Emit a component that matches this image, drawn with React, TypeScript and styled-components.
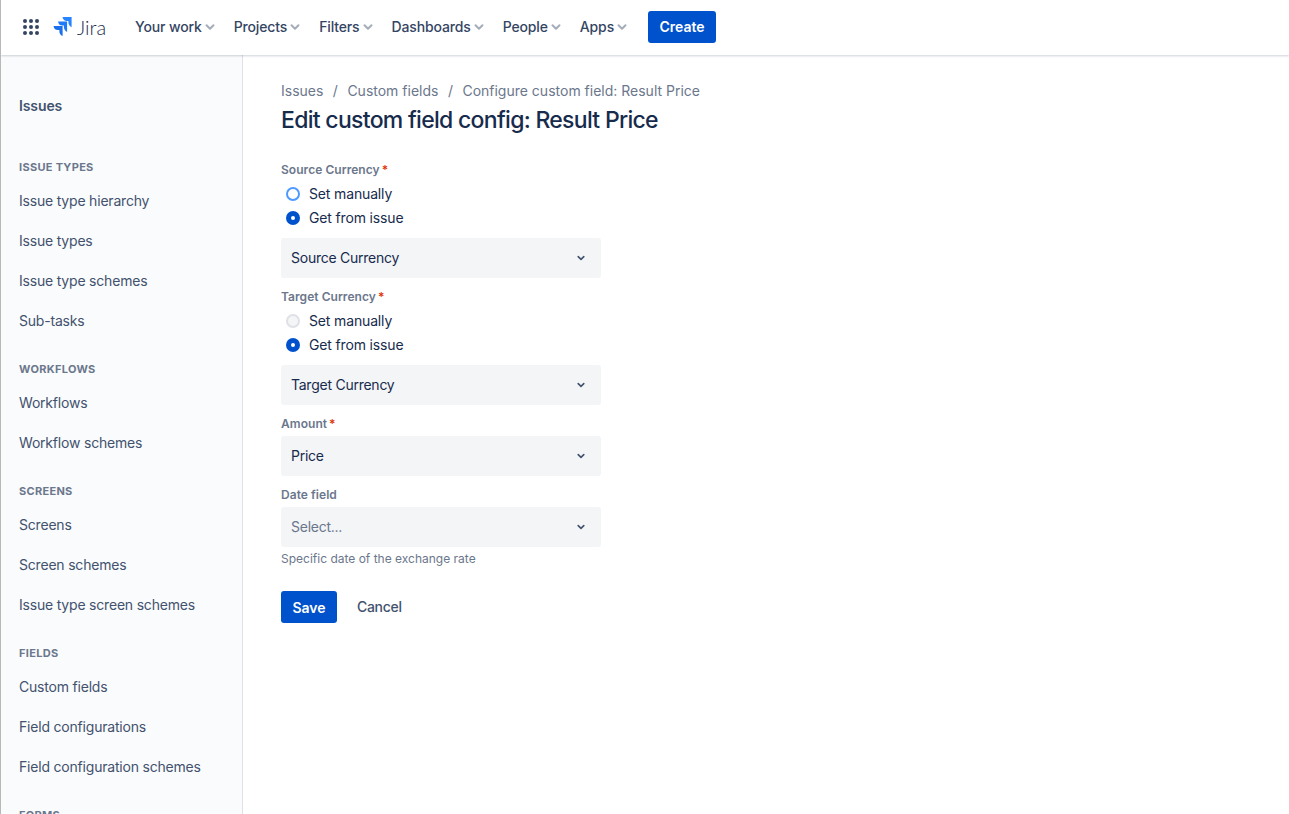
import styled, { createGlobalStyle } from "styled-components";

const GlobalStyle = createGlobalStyle`
  html, body {
    margin: 0;
    height: 100%;
    overflow: hidden;
    background: #fff;
  }
  body {
    font-family: Inter, "Noto Sans", sans-serif;
    font-size: 14px;
    color: #172b4d;
  }
`

const Page = styled.div`
  display: flex;
  flex-direction: column;
  height: 814px;
  border-left: 1px solid #b8b8b8;
  overflow: hidden;
`
const Header = styled.header`
  display: flex;
  align-items: center;
  flex: none;
  box-sizing: border-box;
  height: 55px;
  padding: 0 0 2px 22px;
  background: #fff;
  box-shadow: 0 1px 2px rgba(9, 30, 66, 0.2);
  position: relative;
  z-index: 1;
`
const AppSwitcher = styled.svg`
  width: 16px;
  height: 16px;
  flex: none;
  color: #344563;
`
const Logo = styled.div`
  display: flex;
  align-items: center;
  gap: 5px;
  margin-left: 14px;
  margin-right: 29px;
`
const LogoText = styled.span`
  font-family: Lato, Inter, sans-serif;
  font-weight: 300;
  font-size: 20px;
  color: #172b4d;
  line-height: 24px;
`
const Nav = styled.nav`
  display: flex;
  align-items: center;
  margin-right: 2px;
`
const NavItem = styled.div`
  display: flex;
  align-items: center;
  gap: 3px;
  margin-right: 19px;
  font-weight: 500;
  letter-spacing: -0.14px;
  color: #344563;
  line-height: 20px;
`
const NavChevron = styled.svg`
  width: 10px;
  height: 10px;
  color: #a5adba;
`
const PrimaryButton = styled.button<{ $width: number }>`
  width: ${({ $width }) => $width}px;
  height: 32px;
  padding: 0;
  border: 0;
  border-radius: 3px;
  background: #0052cc;
  color: #fff;
  font-family: inherit;
  font-size: 14px;
  font-weight: 600;
`
const Body = styled.div`
  display: flex;
  flex: 1;
  min-height: 0;
`
const Sidebar = styled.aside`
  flex: none;
  box-sizing: border-box;
  width: 242px;
  padding: 41px 0 0 18px;
  background: #fafbfc;
  border-right: 1px solid #dfe1e6;
  overflow: hidden;
`
const SidebarTitle = styled.div`
  height: 20px;
  line-height: 20px;
  font-weight: 600;
  letter-spacing: -0.1px;
  color: #42526e;
  margin-bottom: 41px;
`
const Section = styled.section`
  margin-bottom: 19px;
`
const SectionTitle = styled.div`
  height: 20px;
  line-height: 20px;
  font-size: 11px;
  font-weight: 700;
  letter-spacing: 0.3px;
  color: #6b778c;
  text-transform: uppercase;
  margin-bottom: 3px;
`
const SidebarLink = styled.a`
  display: flex;
  align-items: center;
  height: 40px;
  letter-spacing: -0.2px;
  color: #42526e;
`
const Main = styled.main`
  flex: 1;
  padding: 25px 0 0 38px;
`
const Breadcrumbs = styled.div`
  display: flex;
  align-items: center;
  height: 20px;
  color: #6b778c;
`
const Crumb = styled.span`
  white-space: nowrap;
`
const Slash = styled.span`
  width: 24px;
  text-align: center;
`
const Heading = styled.h1`
  margin: 5px 0 27px;
  font-size: 23px;
  line-height: 30px;
  font-weight: 500;
  letter-spacing: -0.7px;
  color: #172b4d;
`
const Form = styled.form`
  display: flex;
  flex-direction: column;
  width: 320px;
`
const Label = styled.label<{ $top?: number }>`
  display: block;
  height: 16px;
  line-height: 16px;
  margin-top: ${({ $top }) => $top ?? 0}px;
  font-size: 12px;
  font-weight: 600;
  letter-spacing: 0.05px;
  color: #6b778c;
`
const Required = styled.span`
  color: #de350b;
  margin-left: 2px;
`
const RadioRow = styled.div`
  display: flex;
  align-items: center;
  gap: 9px;
  height: 24px;
  padding-left: 5px;
  letter-spacing: -0.15px;
`
const RadioDot = styled.span<{ $state: "checked" | "focus" | "idle" }>`
  box-sizing: border-box;
  width: 14px;
  height: 14px;
  margin-top: 1px;
  border-radius: 50%;
  display: flex;
  align-items: center;
  justify-content: center;
  background: ${({ $state }) => ($state === "checked" ? "#0052cc" : $state === "focus" ? "#fff" : "#f4f5f7")};
  border: ${({ $state }) =>
    $state === "focus" ? "2px solid #4c9aff" : $state === "idle" ? "2px solid #dfe1e6" : "none"};
  &::after {
    content: "";
    display: ${({ $state }) => ($state === "checked" ? "block" : "none")};
    width: 4px;
    height: 4px;
    border-radius: 50%;
    background: #fff;
  }
`
const RadioGroup = styled.div`
  margin-top: 3px;
  margin-bottom: 9px;
`
const Select = styled.div<{ $top?: number }>`
  display: flex;
  align-items: center;
  justify-content: space-between;
  box-sizing: border-box;
  height: 40px;
  margin-top: ${({ $top }) => $top ?? 0}px;
  padding: 0 15px 0 10px;
  border-radius: 3px;
  background: #f4f5f7;
`
const SelectValue = styled.span<{ $placeholder?: boolean }>`
  margin-bottom: 2px;
  letter-spacing: -0.25px;
  color: ${({ $placeholder }) => ($placeholder ? "#6b778c" : "#172b4d")};
`
const SelectChevron = styled.svg`
  width: 8px;
  height: 8px;
  margin-right: 1px;
  color: #42526e;
`
const Help = styled.div`
  height: 16px;
  line-height: 16px;
  margin-top: 4px;
  font-size: 12px;
  color: #6b778c;
`
const Actions = styled.div`
  display: flex;
  align-items: center;
  gap: 20px;
  margin-top: 24px;
`
const CancelLink = styled.a`
  margin-bottom: 2px;
  font-weight: 500;
  letter-spacing: -0.3px;
  color: #42526e;
`

const Chevron = ({ as: Icon }: { as: typeof NavChevron }) => (
  <Icon viewBox="0 0 10 10" fill="none">
    <path d="M1.5 3.2 5 6.7l3.5-3.5" stroke="currentColor" strokeWidth="2" strokeLinecap="round" strokeLinejoin="round" />
  </Icon>
)

const navItems = ["Your work", "Projects", "Filters", "Dashboards", "People", "Apps"];

const sections = [
  { title: "Issue types", links: ["Issue type hierarchy", "Issue types", "Issue type schemes", "Sub-tasks"] },
  { title: "Workflows", links: ["Workflows", "Workflow schemes"] },
  { title: "Screens", links: ["Screens", "Screen schemes", "Issue type screen schemes"] },
  { title: "Fields", links: ["Custom fields", "Field configurations", "Field configuration schemes"] },
  { title: "Forms", links: [] },
];

const RadioChoice = ({ first }: { first: "focus" | "idle" }) => (
  <RadioGroup>
    <RadioRow><RadioDot $state={first} />Set manually</RadioRow>
    <RadioRow><RadioDot $state="checked" />Get from issue</RadioRow>
  </RadioGroup>
)

export default function App() {
  return <>
    <GlobalStyle />
    <Page>
      <Header>
        <AppSwitcher viewBox="0 0 16 16" fill="currentColor">
          {[2, 8, 14].flatMap(y => [2, 8, 14].map(x => <circle key={`${x}-${y}`} cx={x} cy={y} r="2" />))}
        </AppSwitcher>
        <Logo>
          <svg width="19" height="19" viewBox="0 0 19 19">
            <path d="M18.6 0H9.6c0 2.3 1.8 4 4.1 4h1.7v1.6c0 2.3 1.8 4.1 3.2 4.7z" fill="#2684ff" />
            <path d="M14.1 4.5H5.1c0 2.3 1.8 4.1 4.1 4.1h1.7v1.6c0 2.3 1.8 4.1 3.2 4.7z" fill="#1f7bf5" />
            <path d="M9.6 9H.6c0 2.3 1.8 4.1 4.1 4.1h1.7v1.6c0 2.3 1.8 3.9 3.2 4.3z" fill="#1a70ea" />
          </svg>
          <LogoText>Jira</LogoText>
        </Logo>
        <Nav>
          {navItems.map(item => (
            <NavItem key={item}>{item}<Chevron as={NavChevron} /></NavItem>
          ))}
        </Nav>
        <PrimaryButton type="button" $width={68}>Create</PrimaryButton>
      </Header>
      <Body>
        <Sidebar>
          <SidebarTitle>Issues</SidebarTitle>
          {sections.map(section => (
            <Section key={section.title}>
              <SectionTitle>{section.title}</SectionTitle>
              {section.links.map(link => <SidebarLink key={link}>{link}</SidebarLink>)}
            </Section>
          ))}
        </Sidebar>
        <Main>
          <Breadcrumbs>
            <Crumb>Issues</Crumb><Slash>/</Slash>
            <Crumb>Custom fields</Crumb><Slash>/</Slash>
            <Crumb>Configure custom field: Result Price</Crumb>
          </Breadcrumbs>
          <Heading>Edit custom field config: Result Price</Heading>
          <Form>
            <Label>Source Currency<Required>*</Required></Label>
            <RadioChoice first="focus" />
            <Select>
              <SelectValue>Source Currency</SelectValue>
              <Chevron as={SelectChevron} />
            </Select>
            <Label $top={11}>Target Currency<Required>*</Required></Label>
            <RadioChoice first="idle" />
            <Select>
              <SelectValue>Target Currency</SelectValue>
              <Chevron as={SelectChevron} />
            </Select>
            <Label $top={11}>Amount<Required>*</Required></Label>
            <Select $top={4}>
              <SelectValue>Price</SelectValue>
              <Chevron as={SelectChevron} />
            </Select>
            <Label $top={11}>Date field</Label>
            <Select $top={4}>
              <SelectValue $placeholder>Select...</SelectValue>
              <Chevron as={SelectChevron} />
            </Select>
            <Help>Specific date of the exchange rate</Help>
            <Actions>
              <PrimaryButton type="button" $width={56}>Save</PrimaryButton>
              <CancelLink>Cancel</CancelLink>
            </Actions>
          </Form>
        </Main>
      </Body>
    </Page>
  </>
}
